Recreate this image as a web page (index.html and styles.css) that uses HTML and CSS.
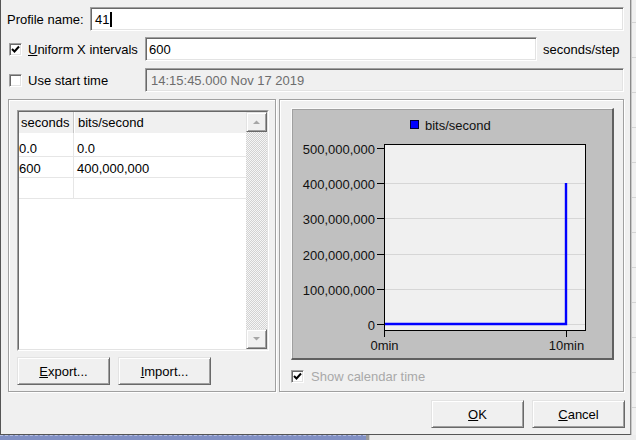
FILE: index.html
```html
<!DOCTYPE html>
<html>
<head>
<meta charset="utf-8">
<link rel="stylesheet" href="styles.css">
</head>
<body>
<div class="screen">
  <div class="dialog">
    <div class="row r1">
      <span class="name-lbl">Profile name:</span>
      <div class="field grow"><span>41</span><span class="caret"></span></div>
    </div>
    <div class="row r2">
      <div class="chk-lbl">
        <span class="cb"><svg width="9" height="9" viewBox="0 0 9 9"><polyline points="1,4 3.5,6.5 8,1.5" fill="none" stroke="#000" stroke-width="2"/></svg></span>
        <span><u>U</u>niform X intervals</span>
      </div>
      <div class="field w-int">600</div>
      <span class="unit">seconds/step</span>
    </div>
    <div class="row r3">
      <div class="chk-lbl">
        <span class="cb"></span>
        <span>Use start time</span>
      </div>
      <div class="field grow disabled">14:15:45.000 Nov 17 2019</div>
    </div>
    <div class="groups">
      <div class="group g-left">
        <div class="table">
          <div class="table-in">
            <div class="grid">
              <div class="hdr"><div class="hc c1">seconds</div><div class="hc c2">bits/second</div></div>
              <div class="tr first"><div class="td c1">0.0</div><div class="td c2">0.0</div></div>
              <div class="tr"><div class="td c1">600</div><div class="td c2">400,000,000</div></div>
              <div class="tr"><div class="td c1"></div><div class="td c2"></div></div>
            </div>
            <div class="vscroll">
              <div class="sbtn"><svg width="7" height="4" viewBox="0 0 7 4"><path d="M0 4L3.5 0.5L7 4Z" fill="#a6a6a6"/></svg></div>
              <div class="track"></div>
              <div class="sbtn"><svg width="7" height="4" viewBox="0 0 7 4"><path d="M0 0L3.5 3.5L7 0Z" fill="#a6a6a6"/></svg></div>
            </div>
          </div>
        </div>
        <div class="btnrow">
          <button class="btn"><u>E</u>xport...</button>
          <button class="btn"><u>I</u>mport...</button>
        </div>
      </div>
      <div class="group g-right">
        <div class="chart">
          <svg class="plot" width="319" height="247" viewBox="0 0 319 247">
            <rect x="117.5" y="10.5" width="8" height="8" fill="#0000ff" stroke="#00003a"/>
            <text x="132" y="20">bits/second</text>
            <rect x="91.5" y="34.5" width="201" height="186" fill="#f0f0f0" stroke="#000"/>
            <path d="M92 73.5H292M92 108.5H292M92 144.5H292M92 179.5H292M92 214.5H292" stroke="#d6d6d6"/>
            <path d="M84 38.5H91M84 73.5H91M84 108.5H91M84 144.5H91M84 179.5H91M84 214.5H91M91.5 221V227M273.5 221V227" stroke="#000"/>
            <text class="yl" x="82" y="44">500,000,000</text>
            <text class="yl" x="82" y="79">400,000,000</text>
            <text class="yl" x="82" y="114">300,000,000</text>
            <text class="yl" x="82" y="150">200,000,000</text>
            <text class="yl" x="82" y="185">100,000,000</text>
            <text class="yl" x="82" y="220">0</text>
            <polyline points="92,214 273,214 273,73" fill="none" stroke="#0000ff" stroke-width="2.4"/>
            <text class="xl" x="91.5" y="240">0min</text>
            <text class="xl" x="273.5" y="240">10min</text>
          </svg>
        </div>
        <div class="calrow">
          <span class="cb"><svg width="9" height="9" viewBox="0 0 9 9"><polyline points="1,4 3.5,6.5 8,1.5" fill="none" stroke="#000" stroke-width="2"/></svg></span>
          <span>Show calendar time</span>
        </div>
      </div>
    </div>
    <div class="footer">
      <button class="btn"><u>O</u>K</button>
      <button class="btn"><u>C</u>ancel</button>
    </div>
  </div>
  <div class="side"></div>
  <div class="bottom">
    <div class="task"></div>
    <div class="sep"></div>
    <div class="rest"></div>
  </div>
  <div class="corner"></div>
</div>
</body>
</html>
```

FILE: styles.css
```css
* { box-sizing: border-box; }

body {
  margin: 0;
  background: #f0f0f0;
  font-family: "Liberation Sans", Arial, sans-serif;
  font-size: 13px;
  color: #000;
}

.screen {
  display: grid;
  grid-template-columns: 631px 5px;
  grid-template-rows: 435px 5px;
  width: 636px;
  height: 440px;
  overflow: hidden;
}

.dialog {
  background: #f0f0f0;
  border-left: 1px solid #555;
  border-right: 1px solid #8a8a8a;
  border-bottom: 1px solid #555;
  padding: 7px 6px 0 6px;
  display: flex;
  flex-direction: column;
}

.row {
  display: flex;
  align-items: center;
  height: 24px;
}
.r2 { margin-top: 6px; }
.r3 { margin-top: 7px; }

.name-lbl { width: 83px; }

.field {
  height: 24px;
  border: 1px solid;
  border-color: #a0a0a0 #fff #fff #a0a0a0;
  box-shadow: inset 1px 1px 0 #696969, inset -1px -1px 0 #e3e3e3;
  background: #fff;
  padding: 0 4px;
  display: flex;
  align-items: center;
  white-space: nowrap;
}
.grow { flex: 1; }
.w-int { width: 392px; padding-left: 3px; }
.disabled { background: #f0f0f0; color: #6d6d6d; padding-left: 5px; }

.caret {
  display: inline-block;
  width: 2px;
  height: 15px;
  background: #000;
  margin-left: 1px;
}

.unit { margin-left: 6px; white-space: nowrap; }

.chk-lbl {
  width: 138px;
  display: flex;
  align-items: center;
  gap: 6px;
  padding-left: 2px;
  white-space: nowrap;
}

.cb {
  width: 13px;
  height: 13px;
  flex: none;
  border: 1px solid;
  border-color: #a0a0a0 #fff #fff #a0a0a0;
  box-shadow: inset 1px 1px 0 #696969, inset -1px -1px 0 #e3e3e3;
  background: #fff;
  display: flex;
  align-items: center;
  justify-content: center;
}

.groups {
  display: flex;
  gap: 3px;
  margin-top: 7px;
  height: 293px;
}

.group {
  border: 1px solid #a0a0a0;
  box-shadow: inset 1px 1px 0 #fff, 1px 1px 0 #fff;
}
.g-left {
  width: 268px;
  margin-left: 1px;
  padding: 10px 0 0 8px;
}
.g-right {
  flex: 1;
  padding: 8px 0 0 11px;
}

.table {
  width: 252px;
  height: 241px;
  border: 1px solid;
  border-color: #a0a0a0 #fff #fff #a0a0a0;
}
.table-in {
  height: 100%;
  border: 1px solid;
  border-color: #696969 #e3e3e3 #e3e3e3 #696969;
  background: #fff;
  display: flex;
}
.grid { flex: 1; }

.hdr {
  display: flex;
  height: 21px;
  background: #f0f0f0;
}
.hc {
  display: flex;
  align-items: center;
  white-space: nowrap;
}
.hc.c1 { width: 55px; padding-left: 2px; border-right: 1px solid #c6c6c6; }
.hc.c2 { flex: 1; padding-left: 3px; border-left: 1px solid #fff; }

.tr {
  display: flex;
  height: 21px;
  border-bottom: 1px solid #e6e6e6;
}
.tr.first { height: 24px; }
.td { padding-top: 4px; white-space: nowrap; }
.tr.first .td { padding-top: 8px; }
.td.c1 { width: 55px; border-right: 1px solid #e6e6e6; }
.td.c2 { flex: 1; padding-left: 3px; }

.vscroll {
  width: 21px;
  display: flex;
  flex-direction: column;
}
.sbtn {
  height: 20px;
  background: #f0f0f0;
  border: 1px solid;
  border-color: #e3e3e3 #696969 #696969 #e3e3e3;
  box-shadow: inset 1px 1px 0 #fff, inset -1px -1px 0 #a0a0a0;
  display: flex;
  align-items: center;
  justify-content: center;
}
.track {
  flex: 1;
  background: repeating-conic-gradient(#d2d2d2 0 25%, #f6f6f6 0 50%) 0 0 / 2px 2px;
}

.btnrow {
  display: flex;
  gap: 8px;
  margin-top: 6px;
}

.btn {
  width: 93px;
  height: 28px;
  padding: 0;
  font: inherit;
  color: #000;
  background: #f0f0f0;
  border: 1px solid;
  border-color: #e3e3e3 #696969 #696969 #e3e3e3;
  box-shadow: inset 1px 1px 0 #fff, inset -1px -1px 0 #a0a0a0;
}

.chart {
  width: 323px;
  height: 252px;
  padding: 1px 0 0 1px;
  background: #c0c0c0;
  border-style: solid;
  border-width: 1px 2px 2px 1px;
  border-color: #fafafa #606060 #606060 #fafafa;
  box-shadow: inset 1px 1px 0 #a0a0a0;
}
.plot { display: block; }
.plot text {
  font-family: "Liberation Sans", Arial, sans-serif;
  font-size: 13px;
  fill: #111;
}
.plot .yl { text-anchor: end; }
.plot .xl { text-anchor: middle; }

.calrow {
  display: flex;
  align-items: center;
  gap: 7px;
  height: 15px;
  margin-top: 9px;
  color: #a9a9a9;
}

.footer {
  display: flex;
  justify-content: flex-end;
  gap: 8px;
  margin-top: 8px;
  margin-right: -1px;
}

.side {
  background: repeating-linear-gradient(to bottom, #f0f0f0 0 22px, #d4d4d4 22px 23px, #f0f0f0 23px 35px);
  border-left: 1px solid #c8c8c8;
}

.bottom {
  display: flex;
}
.task {
  width: 366px;
  background: #8190c4;
  border-top: 1px dashed #b4bee2;
}
.sep {
  width: 4px;
  background: #9a9a9a;
  border-right: 1px solid #d0d0d0;
}
.rest {
  flex: 1;
  background: #ececec;
  border-left: 5px solid #ececec;
}
.corner { background: #ececec; }
```
